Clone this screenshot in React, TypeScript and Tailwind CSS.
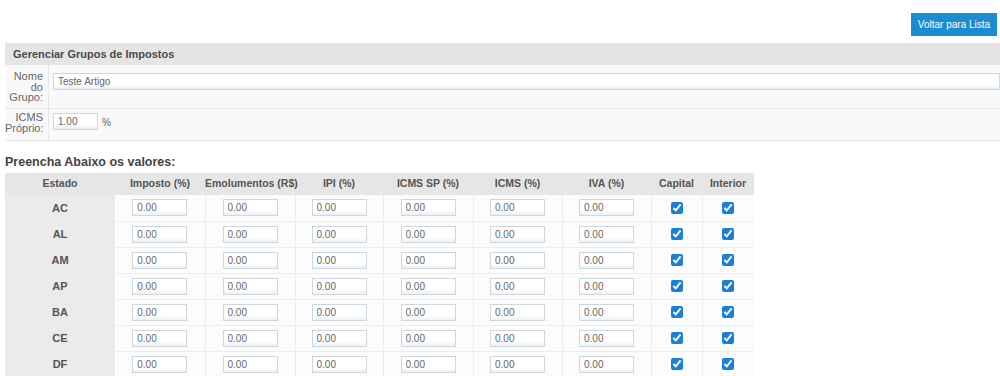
import React from "react";

const estados = ["AC", "AL", "AM", "AP", "BA", "CE", "DF"];

const colunas = [
  { label: "Estado", w: "w-[110px]" },
  { label: "Imposto (%)", w: "w-[90px]" },
  { label: "Emolumentos (R$)", w: "w-[90px]" },
  { label: "IPI (%)", w: "w-[88px]" },
  { label: "ICMS SP (%)", w: "w-[90px]" },
  { label: "ICMS (%)", w: "w-[89px]" },
  { label: "IVA (%)", w: "w-[89px]" },
  { label: "Capital", w: "w-[51px]" },
  { label: "Interior", w: "w-[52px]" },
];

const inputClass =
  "h-[17px] border border-[#cfd6dc] bg-gradient-to-b from-white from-70% to-[#e9f1f8] px-[4px] text-[10px] text-[#666] outline-none";

const NumberCell = () => (
  <td className="border-r border-b border-[#ececec] p-0 text-center">
    <input type="text" defaultValue="0.00" className={`${inputClass} w-[55px] align-middle`} />
  </td>
);

const CheckCell = ({ last }: { last?: boolean }) => (
  <td className={`border-b border-[#ececec] p-0 text-center ${last ? "" : "border-r"}`}>
    <input
      type="checkbox"
      defaultChecked
      className="h-[12px] w-[12px] align-middle accent-[#1a7fd8]"
    />
  </td>
);

export default function App() {
  return (
    <div className="h-screen overflow-hidden bg-white font-['Liberation_Sans',Arial,sans-serif] text-[#555]">
      {/* top bar */}
      <div className="flex h-[43px] justify-end pt-[13px] pr-[3px]">
        <button className="h-[23px] w-[86px] bg-[#1b8bd2] text-[10px] text-white">
          Voltar para Lista
        </button>
      </div>

      <div className="ml-[5px]">
        <div className="flex h-[22px] items-center bg-[#e5e5e5] px-[8px] text-[11px] font-bold text-[#4a4a4a]">
          Gerenciar Grupos de Impostos
        </div>

        <div className="flex h-[44px] border-b border-[#e6e6e6] bg-[#f9f9f9]">
          <div className="w-[44px] border-r border-[#e6e6e6] pt-[6px] pr-[5px] text-right text-[11px] leading-[10.5px] text-[#666]">
            Nome do Grupo:
          </div>
          <div className="flex-1 pt-[3px] pl-[4px]">
            <input type="text" defaultValue="Teste Artigo" className={`${inputClass} w-full`} />
          </div>
        </div>

        <div className="flex h-[32px] border-b border-[#e6e6e6] bg-[#f9f9f9]">
          <div className="w-[44px] border-r border-[#e6e6e6] pt-[3px] pr-[5px] text-right text-[11px] leading-[10.5px] text-[#666]">
            ICMS Próprio:
          </div>
          <div className="flex flex-1 items-start gap-[4px] pt-[4px] pl-[4px]">
            <input type="text" defaultValue="1.00" className={`${inputClass} w-[45px]`} />
            <span className="pt-[2px] text-[10px] text-[#666]">%</span>
          </div>
        </div>

        <h2 className="mt-[12px] h-[20px] text-[12.5px] font-bold text-[#444]">
          Preencha Abaixo os valores:
        </h2>

        <table className="w-[749px] table-fixed border-collapse text-[10.5px]">
          <colgroup>
            {colunas.map((c) => (
              <col key={c.label} className={c.w} />
            ))}
          </colgroup>
          <thead>
            <tr className="h-[22px] bg-[#e6e6e6]">
              {colunas.map((c) => (
                <th key={c.label} className="whitespace-nowrap p-0 text-center font-bold text-[#555]">
                  {c.label}
                </th>
              ))}
            </tr>
          </thead>
          <tbody>
            {estados.map((uf) => (
              <tr key={uf} className="h-[26px] bg-[#fcfcfc]">
                <td className="bg-[#ebebeb] p-0 text-center text-[11px] font-bold text-[#555]">{uf}</td>
                <NumberCell />
                <NumberCell />
                <NumberCell />
                <NumberCell />
                <NumberCell />
                <NumberCell />
                <CheckCell />
                <CheckCell last />
              </tr>
            ))}
          </tbody>
        </table>
      </div>
    </div>
  );
}
